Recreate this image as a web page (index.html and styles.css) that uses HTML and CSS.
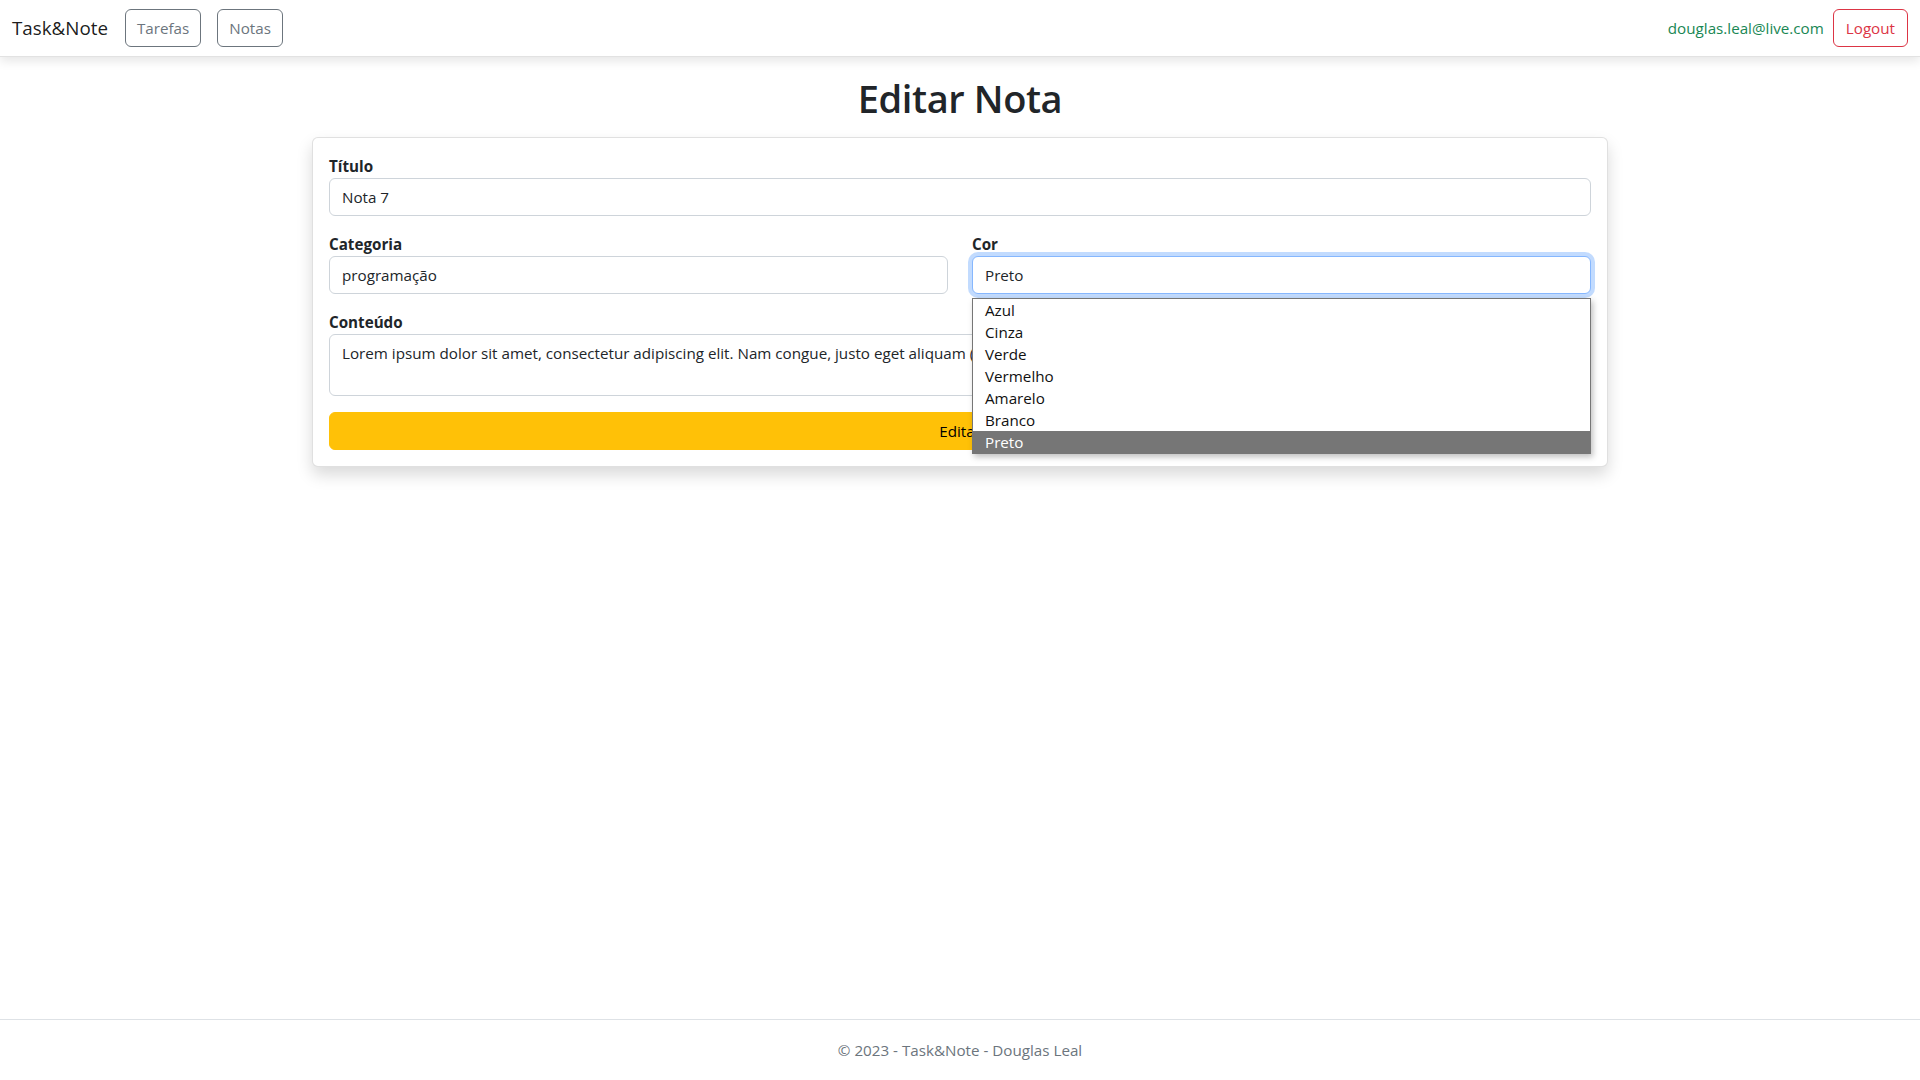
FILE: index.html
```html
<!DOCTYPE html>
<html lang="pt-br">
<head>
<meta charset="utf-8">
<title>Editar Nota - Task&amp;Note</title>
<link rel="stylesheet" href="styles.css">
</head>
<body>
<header class="navbar">
  <div class="nav-left">
    <a class="brand" href="#">Task&amp;Note</a>
    <a class="btn btn-outline-secondary" href="#">Tarefas</a>
    <a class="btn btn-outline-secondary" href="#">Notas</a>
  </div>
  <div class="nav-right">
    <span class="email">douglas.leal@live.com</span>
    <a class="btn btn-outline-danger" href="#">Logout</a>
  </div>
</header>

<main class="container">
  <h1 class="page-title">Editar Nota</h1>
  <div class="card">
    <form class="card-body">
      <div class="group">
        <label class="form-label">Título</label>
        <input class="form-control" type="text" value="Nota 7">
      </div>
      <div class="row group">
        <div class="col">
          <label class="form-label">Categoria</label>
          <input class="form-control" type="text" value="programação">
        </div>
        <div class="col">
          <label class="form-label">Cor</label>
          <div class="select-wrap">
            <select class="form-control focused">
              <option>Preto</option>
            </select>
            <ul class="listbox">
              <li class="option">Azul</li>
              <li class="option">Cinza</li>
              <li class="option">Verde</li>
              <li class="option">Vermelho</li>
              <li class="option">Amarelo</li>
              <li class="option">Branco</li>
              <li class="option selected">Preto</li>
            </ul>
          </div>
        </div>
      </div>
      <div class="group">
        <label class="form-label">Conteúdo</label>
        <textarea class="form-control textarea" rows="2">Lorem ipsum dolor sit amet, consectetur adipiscing elit. Nam congue, justo eget aliquam (erat, vel tincidunt nunc).</textarea>
      </div>
      <button type="button" class="btn btn-warning">Editar</button>
    </form>
  </div>
</main>

<footer class="footer">© 2023 - Task&amp;Note - Douglas Leal</footer>
</body>
</html>
```

FILE: styles.css
```css
* { box-sizing: border-box; }

html, body { height: 100%; }

body {
  margin: 0;
  font-family: "Open Sans", "Noto Sans", sans-serif;
  font-size: 15.2px;
  line-height: 24px;
  color: #212529;
  background: #fff;
  display: flex;
  flex-direction: column;
  min-height: 100vh;
}

a { text-decoration: none; }

/* navbar */
.navbar {
  display: flex;
  justify-content: space-between;
  align-items: center;
  height: 57px;
  padding: 0 12px;
  background: #fff;
  border-bottom: 1px solid #e2e2e2;
  box-shadow: 0 4px 10px rgba(0, 0, 0, 0.1);
  flex-shrink: 0;
  position: relative;
  z-index: 2;
}

.nav-left, .nav-right {
  display: flex;
  align-items: center;
}

.brand {
  font-size: 18.8px;
  color: rgba(0, 0, 0, 0.9);
  margin-right: 17px;
}

.nav-left .btn-outline-secondary {
  margin-right: 16px;
  padding: 6px 11px;
}

.btn {
  display: inline-block;
  height: 38px;
  padding: 6px 12px;
  font-family: inherit;
  font-size: 15.2px;
  line-height: 24px;
  border: 1px solid transparent;
  border-radius: 6px;
  background: transparent;
  text-align: center;
  cursor: pointer;
}

.btn-outline-secondary {
  color: #6c757d;
  border-color: #6c757d;
}

.btn-outline-danger {
  color: #dc3545;
  border-color: #dc3545;
}

.email {
  color: #198754;
  margin-right: 9px;
}

/* main */
.container {
  width: 1320px;
  margin: 0 auto;
  padding: 17px 12px 0;
}

.page-title {
  margin: 0 0 15px;
  font-size: 38px;
  line-height: 48px;
  font-weight: 600;
  letter-spacing: -0.4px;
  text-align: center;
  color: #212529;
}

.card {
  background: #fff;
  border: 1px solid rgba(0, 0, 0, 0.12);
  border-radius: 6px;
  box-shadow: 0 8px 16px rgba(0, 0, 0, 0.15);
}

.card-body {
  padding: 16px;
  margin: 0;
}

.group { margin-bottom: 16px; }

.row {
  display: grid;
  grid-template-columns: 1fr 1fr;
  column-gap: 24px;
}

.form-label {
  display: block;
  font-weight: 700;
  line-height: 24px;
}

.form-control {
  display: block;
  width: 100%;
  height: 38px;
  padding: 6px 12px;
  font-family: inherit;
  font-size: 15.2px;
  line-height: 24px;
  color: #212529;
  background: #fff;
  border: 1px solid #ced4da;
  border-radius: 6px;
  appearance: none;
  -webkit-appearance: none;
  outline: none;
}

.form-control.focused {
  border-color: #86b7fe;
  box-shadow: 0 0 0 4px rgba(13, 110, 253, 0.25);
}

.textarea {
  height: 62px;
  resize: vertical;
  overflow: hidden;
  white-space: nowrap;
}

.select-wrap { position: relative; }

.listbox {
  position: absolute;
  top: calc(100% + 4px);
  left: 0;
  right: 0;
  margin: 0;
  padding: 0;
  list-style: none;
  background: #fff;
  border: 1px solid #767676;
  box-shadow: 2px 3px 6px rgba(0, 0, 0, 0.25);
  z-index: 10;
}

.option {
  height: 22px;
  padding: 0 12px;
  font-size: 15.2px;
  line-height: 22px;
  color: #111;
}

.option.selected {
  background: #767676;
  color: #fff;
}

.btn-warning {
  width: 100%;
  color: #000;
  background: #ffc107;
  border-color: #ffc107;
}

/* footer */
.footer {
  margin-top: auto;
  border-top: 1px solid #dee2e6;
  line-height: 60px;
  text-align: center;
  color: #6c757d;
  white-space: nowrap;
}
```
